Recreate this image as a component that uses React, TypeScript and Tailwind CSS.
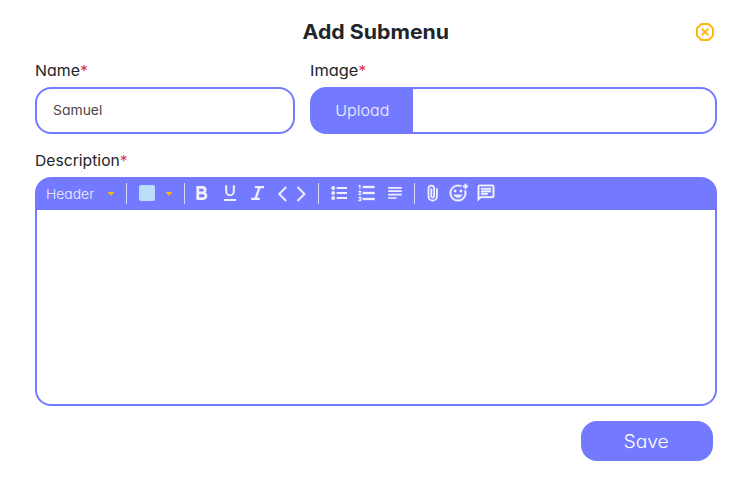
import type { ReactNode } from "react";
import { MdFormatListNumbered, MdOutlineAddReaction, MdOutlineChat } from "react-icons/md";

function Label({ children }: { children: ReactNode }) {
  return (
    <div className="flex h-[22px] items-center text-[15px] leading-[22px] text-[#212529]">
      {children}
    </div>
  );
}

function Required() {
  return <span className="text-[#dc3545]">*</span>;
}

function Divider() {
  return <div className="mt-px h-[21px] w-px shrink-0 bg-[#d9dbff]" />;
}

function Caret() {
  return (
    <svg width="6" height="4" viewBox="0 0 6 4" className="mt-px shrink-0" fill="#ffb60a">
      <path d="M.8 0h4.4c.7 0 .9.6.5 1L3.5 3.2a.7.7 0 0 1-1 0L.3 1C-.1.6.1 0 .8 0Z" />
    </svg>
  );
}

function ToolIcon({ children, weight = 2 }: { children: ReactNode; weight?: number }) {
  return (
    <svg width="20" height="20" viewBox="0 0 20 20" className="shrink-0" fill="none" stroke="currentColor" strokeWidth={weight}>
      {children}
    </svg>
  );
}

function CloseIcon() {
  return (
    <svg width="20" height="20" viewBox="0 0 20 20" fill="none" stroke="#ffb60a" strokeWidth="2">
      <path d="M6.4 2h7.2L18 6.4v7.2L13.6 18H6.4L2 13.6V6.4Z" strokeLinejoin="round" />
      <path d="m6.6 6.6 6.8 6.8m0-6.8-6.8 6.8" />
    </svg>
  );
}

export default function App() {
  return (
    <main className="h-[488px] w-[750px] overflow-hidden bg-white pl-[35px] pr-[33px] pt-[18px] font-['Inter',sans-serif] [font-feature-settings:'cv11']">
      <header className="grid h-7 grid-cols-[1fr_auto_1fr] items-center">
        <span />
        <h1 className="scale-x-[1.065] text-[20px] leading-7 font-bold text-[#212529]">Add Submenu</h1>
        <button aria-label="Close" className="mr-[2px] justify-self-end">
          <CloseIcon />
        </button>
      </header>

      <section className="mt-[14px] flex gap-[15px]">
        <div className="w-[260px]">
          <Label>
            <span className="origin-left scale-x-[1.06]">Name<Required /></span>
          </Label>
          <div className="mt-[5px] flex h-[47px] items-center rounded-[16px] border-2 border-[#747aff] pl-4 text-[13px] text-[#504447]">
            <span className="origin-left scale-x-[1.07]">Samuel</span>
          </div>
        </div>
        <div className="w-[407px]">
          <Label>
            <span className="origin-left scale-x-[1.09]">Image<Required /></span>
          </Label>
          <div className="mt-[5px] flex h-[47px] rounded-[16px] bg-[#747aff] p-[2px]">
            <button className="flex w-[101px] items-center justify-center pr-px pt-[2px] text-[15px] font-light text-[#f2f2fc]">
              <span className="scale-x-[1.07]">Upload</span>
            </button>
            <div className="grow rounded-r-[14px] bg-white" />
          </div>
        </div>
      </section>

      <section className="mt-4">
        <Label>
          <span className="origin-left scale-x-[1.045]">Description<Required /></span>
        </Label>
        <div className="mt-[5px] flex h-[229px] flex-col rounded-[16px] bg-[#747aff] p-[2px] pt-0">
          <div className="flex h-[33px] shrink-0 items-center pb-px pl-[9px] text-[#f0f0fd]">
            <span className="flex w-[62px] shrink-0 pt-[3px] text-[13px] font-light">
              <span className="origin-left scale-x-[1.07]">Header</span>
            </span>
            <Caret />
            <span className="w-3 shrink-0" />
            <Divider />
            <span className="ml-3 size-4 shrink-0 rounded-[2px] bg-[#bbdefb]" />
            <span className="w-[11px] shrink-0" />
            <Caret />
            <span className="w-3 shrink-0" />
            <Divider />
            <span className="w-[7px] shrink-0" />
            <ToolIcon weight={2.8}>
              <path d="M5.8 4.4h4.6a2.7 2.7 0 0 1 0 5.4H5.8Zm0 5.4h5.2a2.9 2.9 0 0 1 0 5.8H5.8Z" />
            </ToolIcon>
            <span className="w-2 shrink-0" />
            <ToolIcon weight={2}>
              <path d="M6.2 2.2v6.2a3.8 3.8 0 0 0 7.6 0V2.2M4 17h12" />
            </ToolIcon>
            <span className="w-[7px] shrink-0" />
            <ToolIcon weight={2.3}>
              <path d="M7.8 4.1h9.2M4.2 15.9h8.6M12.6 4.1 8.4 15.9" />
            </ToolIcon>
            <svg className="ml-[9px] mt-px shrink-0" width="31" height="18" viewBox="0 0 31 18" fill="none" stroke="currentColor" strokeWidth="1.9">
              <path d="M10.2 2 3.2 9l7 7M21.5 2l7 7-7 7" />
            </svg>
            <span className="w-[11px] shrink-0" />
            <Divider />
            <span className="w-[10px] shrink-0" />
            <ToolIcon>
              <path d="M7.6 5H18M7.6 10H18M7.6 15H18" />
              <g fill="currentColor" stroke="none">
                <circle cx="4.2" cy="5" r="1.9" />
                <circle cx="4.2" cy="10" r="1.9" />
                <circle cx="4.2" cy="15" r="1.9" />
              </g>
            </ToolIcon>
            <span className="w-2 shrink-0" />
            <MdFormatListNumbered preserveAspectRatio="none" className="h-6 w-5 shrink-0 [&>path:last-child]:stroke-current [&>path:last-child]:stroke-[0.4] [&>path:first-child]:stroke-none" />
            <span className="w-2 shrink-0" />
            <ToolIcon weight={1.7}>
              <path d="M3.2 4.8h13.6M3.2 8.2h13.6M3.2 11.6h13.6M3.2 15h8.4" />
            </ToolIcon>
            <span className="w-[9px] shrink-0" />
            <Divider />
            <span className="w-2 shrink-0" />
            <ToolIcon weight={1.8}>
              <path d="M13.9 5.2v8.2a4.2 4.2 0 0 1-8.4 0V5.4a2.8 2.8 0 0 1 5.6 0v7.8a1.4 1.4 0 0 1-2.8 0V5.4" />
            </ToolIcon>
            <MdOutlineAddReaction className="ml-[5px] size-5 shrink-0 [&>path:last-child]:stroke-current [&>path:last-child]:stroke-[0.4] [&>path:first-child]:stroke-none" />
            <MdOutlineChat className="ml-2 size-5 shrink-0 [&>path:last-child]:stroke-current [&>path:last-child]:stroke-[0.4] [&>path:first-child]:stroke-none" />
          </div>
          <div className="grow rounded-b-[14px] bg-white" />
        </div>
      </section>

      <footer className="mt-[15px] flex justify-end pr-1">
        <button className="flex h-10 w-[132px] items-center justify-center rounded-[16px] bg-[#747aff] pr-[2px] text-[18px] font-light text-white">
          <span className="scale-x-[1.07]">Save</span>
        </button>
      </footer>
    </main>
  );
}
